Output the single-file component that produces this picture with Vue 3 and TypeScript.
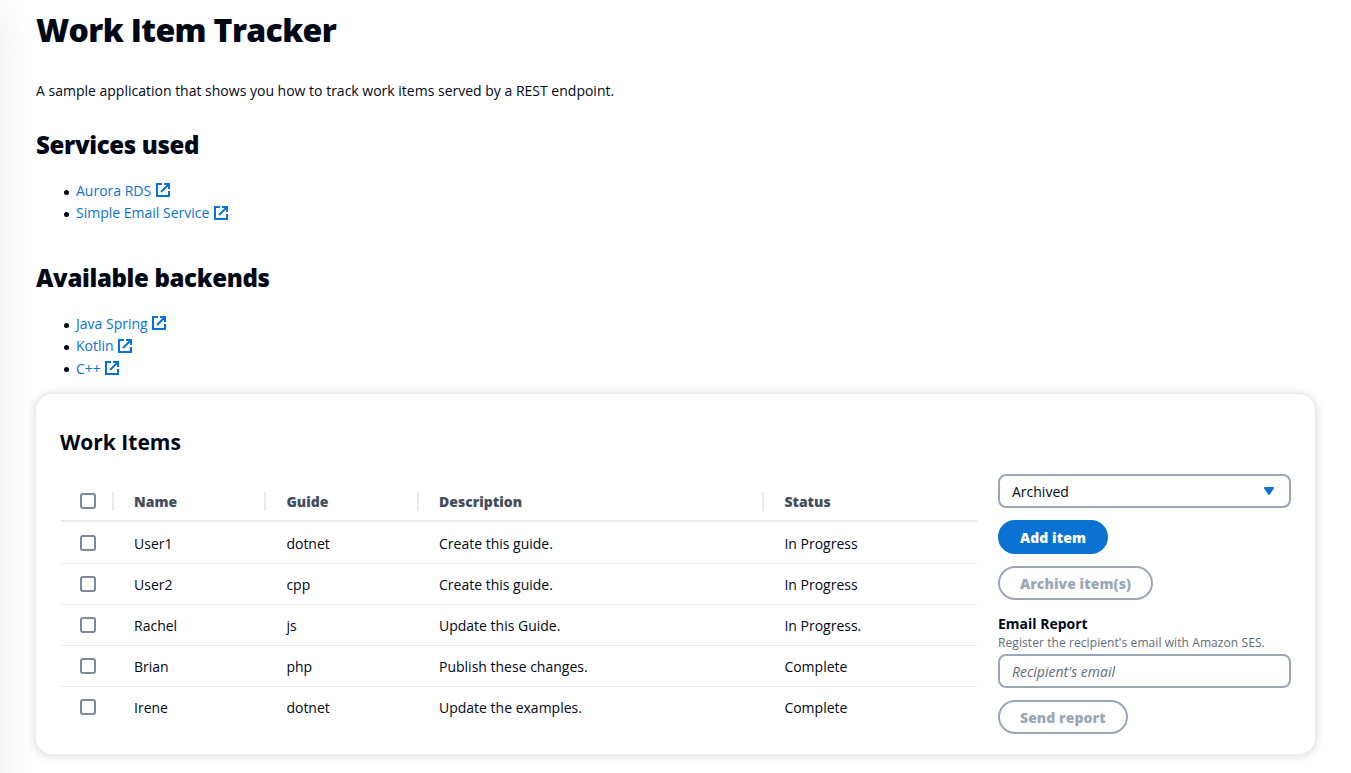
<script setup lang="ts">
import { ref } from 'vue'

interface WorkItem {
  name: string
  guide: string
  description: string
  status: string
}

const sections: { title: string; links: string[] }[] = [
  { title: 'Services used', links: ['Aurora RDS', 'Simple Email Service'] },
  { title: 'Available backends', links: ['Java Spring', 'Kotlin', 'C++'] },
]

const items: WorkItem[] = [
  { name: 'User1', guide: 'dotnet', description: 'Create this guide.', status: 'In Progress' },
  { name: 'User2', guide: 'cpp', description: 'Create this guide.', status: 'In Progress' },
  { name: 'Rachel', guide: 'js', description: 'Update this Guide.', status: 'In Progress.' },
  { name: 'Brian', guide: 'php', description: 'Publish these changes.', status: 'Complete' },
  { name: 'Irene', guide: 'dotnet', description: 'Update the examples.', status: 'Complete' },
]

const columns = ['Name', 'Guide', 'Description', 'Status']
const email = ref('')
</script>

<template>
  <main class="page">
    <div class="edge"></div>
    <h1>Work Item Tracker</h1>
    <p class="intro">A sample application that shows you how to track work items served by a REST endpoint.</p>

    <section v-for="section in sections" :key="section.title" class="section">
      <h2>{{ section.title }}</h2>
      <ul>
        <li v-for="link in section.links" :key="link">
          <a href="#">{{ link }}<svg class="external" viewBox="0 0 16 16" aria-hidden="true">
            <path d="M7 2H2v12h12V9M9 2h5v5M6 10l8-8" />
          </svg></a>
        </li>
      </ul>
    </section>

    <section class="card">
      <h3>Work Items</h3>
      <div class="body">
        <div class="table">
          <div class="row head">
            <div class="cell check"><span class="box"></span></div>
            <div v-for="c in columns" :key="c" class="cell">{{ c }}</div>
          </div>
          <div v-for="item in items" :key="item.name" class="row">
            <div class="cell check"><span class="box"></span></div>
            <div class="cell">{{ item.name }}</div>
            <div class="cell">{{ item.guide }}</div>
            <div class="cell">{{ item.description }}</div>
            <div class="cell">{{ item.status }}</div>
          </div>
        </div>
        <aside class="side">
          <button type="button" class="field select">
            <span>Archived</span>
            <svg class="caret" viewBox="0 0 16 16" aria-hidden="true"><path d="M4 5h8l-4 6z" /></svg>
          </button>
          <button type="button" class="btn primary">Add item</button>
          <button type="button" class="btn">Archive item(s)</button>
          <div class="form">
            <label for="email">Email Report</label>
            <p class="hint">Register the recipient's email with Amazon SES.</p>
            <input id="email" v-model="email" class="field" placeholder="Recipient's email" />
          </div>
          <button type="button" class="btn">Send report</button>
        </aside>
      </div>
    </section>
  </main>
</template>

<style>
body {
  overflow: hidden;
  background: #fff;
}
</style>

<style scoped>
.page,
.page * {
  box-sizing: border-box;
}
.page {
  position: relative;
  height: 773px;
  padding: 0 36px;
  overflow: hidden;
  font-family: 'Open Sans', 'Noto Sans', sans-serif;
  font-size: 14px;
  line-height: 20px;
  color: #000716;
}
.edge {
  position: absolute;
  left: -40px;
  top: 0;
  bottom: -60px;
  width: 40px;
  box-shadow: 0 10px 40px rgba(0, 0, 0, 0.08);
}
h1 {
  margin: 10px 0 0;
  font-size: 32px;
  line-height: 40px;
  font-weight: 800;
  letter-spacing: -0.64px;
}
.intro {
  margin: 30px 0 0;
  line-height: 22px;
}
h2 {
  margin: 0;
  font-size: 24px;
  line-height: 32px;
  font-weight: 800;
  letter-spacing: -0.34px;
}
.section {
  height: 133px;
  padding-top: 27px;
}
.section + .section {
  height: 159px;
}
ul {
  margin: 19px 0 0;
  padding-left: 28px;
  list-style: none;
}
li {
  display: flex;
  align-items: center;
  height: 22.4px;
  line-height: 22.4px;
}
li::before {
  content: '';
  width: 5px;
  height: 5px;
  margin: 2px 7px 0 0;
  border-radius: 50%;
  background: #000716;
}
a {
  display: inline-flex;
  align-items: center;
  color: #0972d3;
  text-decoration: none;
}
.external {
  width: 16px;
  height: 16px;
  margin: -2px 0 0 3.4px;
  fill: none;
  stroke: #0972d3;
  stroke-width: 2;
}
.card {
  height: 360px;
  padding: 36px 24px 0;
  border-radius: 16px;
  background: #fff;
  box-shadow: 0 0 1px 1px #e9ebed, 0 1px 8px 2px rgba(0, 7, 22, 0.12);
}
h3 {
  margin: 0;
  font-size: 21px;
  line-height: 24px;
  font-weight: 700;
}
.body {
  display: flex;
  margin-top: 20px;
}
.table {
  width: 916px;
  margin: 9px 21px 0 1px;
}
.row {
  display: grid;
  grid-template-columns: 53px 152.4px 152.6px 345.4px 1fr;
  height: 41px;
  border-bottom: 1px solid #ebebeb;
}
.row:last-child {
  border-color: transparent;
}
.head {
  height: 39px;
  border-bottom: 2px solid #ebebeb;
  font-weight: 800;
  color: #414d5c;
}
.row:nth-child(2) {
  height: 42px;
}
.cell {
  display: flex;
  align-items: center;
  padding: 2px 0 0 20px;
}
.check {
  padding-top: 0;
}
.head .cell {
  padding-top: 0;
}
.head .check {
  padding-bottom: 1px;
}
.head .cell:not(:last-child) {
  position: relative;
}
.head .cell:not(:last-child)::after {
  content: '';
  position: absolute;
  right: 0;
  top: 9px;
  width: 2px;
  height: 19px;
  background: #ebebeb;
}
.box {
  width: 16px;
  height: 16px;
  margin-left: -1px;
  border: 2px solid #7d8998;
  border-radius: 3px;
}
.side {
  display: flex;
  flex-direction: column;
  align-items: flex-start;
  gap: 12px;
  width: 293px;
}
.field {
  width: 100%;
  height: 34px;
  padding: 1px 12px 0;
  border: 2px solid #9ba7b6;
  border-radius: 8px;
  outline: 0;
  background: #fff;
  font: inherit;
  color: #000716;
}
.select {
  display: flex;
  align-items: center;
  justify-content: space-between;
}
.caret {
  width: 16px;
  height: 16px;
  margin-top: -1px;
  fill: #0972d3;
  stroke: #0972d3;
  stroke-width: 2;
  stroke-linejoin: round;
}
.field::placeholder {
  color: #5f6b7a;
  font-style: italic;
  opacity: 1;
}
.btn {
  height: 34px;
  padding: 1px 20px 0;
  border: 2px solid #9ba7b6;
  border-radius: 20px;
  background: #fff;
  font: inherit;
  font-weight: 800;
  letter-spacing: 0.07px;
  color: #9ba7b6;
}
.primary {
  border-color: #0972d3;
  background: #0972d3;
  color: #fff;
}
.form {
  width: 100%;
  padding-top: 2px;
}
label {
  display: block;
  font-weight: 700;
}
.hint {
  margin: 0 0 3px;
  padding-top: 1px;
  font-size: 12px;
  line-height: 16px;
  letter-spacing: 0.08px;
  color: #5f6b7a;
}
.form .field {
  display: block;
}
</style>
